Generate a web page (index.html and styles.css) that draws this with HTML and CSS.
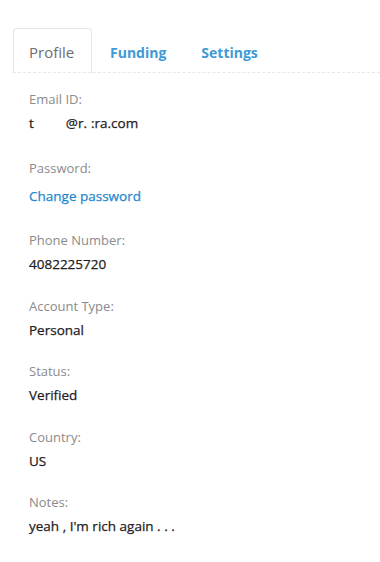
FILE: index.html
```html
<!DOCTYPE html>
<html>
<head>
<meta charset="utf-8">
<link rel="stylesheet" href="styles.css">
</head>
<body>
<div class="page">
  <div class="tabs">
    <div class="tab active">Profile</div>
    <div class="tab">Funding</div>
    <div class="tab">Settings</div>
  </div>
  <div class="fields">
    <div class="field email">
      <div class="label">Email ID:</div>
      <div class="value"><span>t</span><span class="gap1"></span><span>@r.</span><span class="gap2"></span><span>:ra.com</span></div>
    </div>
    <div class="field password">
      <div class="label">Password:</div>
      <div class="value link">Change password</div>
    </div>
    <div class="field">
      <div class="label">Phone Number:</div>
      <div class="value">4082225720</div>
    </div>
    <div class="field">
      <div class="label">Account Type:</div>
      <div class="value">Personal</div>
    </div>
    <div class="field">
      <div class="label">Status:</div>
      <div class="value">Verified</div>
    </div>
    <div class="field">
      <div class="label">Country:</div>
      <div class="value">US</div>
    </div>
    <div class="field">
      <div class="label">Notes:</div>
      <div class="value">yeah , I'm rich again . . .</div>
    </div>
  </div>
</div>
</body>
</html>
```
FILE: styles.css
```css
html, body {
  margin: 0;
  padding: 0;
  background: #ffffff;
}
body {
  font-family: "Open Sans", Lato, sans-serif;
  color: #2c2e2f;
}
.page {
  width: 380px;
  height: 562px;
  padding-top: 28px;
  box-sizing: border-box;
}
.tabs {
  display: flex;
  margin-left: 13px;
  border-bottom: 1px dashed #e8e8e8;
  height: 45px;
  box-sizing: border-box;
}
.tab {
  font-size: 14px;
  font-weight: 700;
  color: #3e9ad6;
  padding: 4px 17px 0 18px;
  display: flex;
  align-items: center;
  height: 44px;
  margin-bottom: -1px;
  box-sizing: border-box;
}
.tab.active {
  color: #6d6e71;
  font-weight: 400;
  font-size: 15px;
  border: 1px solid #e6e6e6;
  border-bottom: 1px solid #ffffff;
  border-radius: 4px 4px 0 0;
  width: 79px;
  height: 46px;
  padding-left: 15px;
  padding-top: 2px;
  padding-bottom: 0;
}
.fields {
  padding-left: 29px;
  padding-top: 17px;
}
.field {
  height: 65.5px;
}
.field.email {
  height: 69px;
}
.field.password {
  height: 72px;
}
.label {
  font-size: 13px;
  color: #8a8b8d;
  line-height: 18px;
}
.value {
  font-size: 13.5px;
  font-weight: 400;
  color: #1f2022;
  line-height: 18px;
  margin-top: 6px;
  display: flex;
  -webkit-text-stroke: 0.25px #1f2022;
}
.value.link {
  color: #1e88cf;
  -webkit-text-stroke: 0.25px #1e88cf;
  margin-top: 10px;
}
.gap1 {
  width: 32px;
}
.gap2 {
  width: 4px;
}
```
